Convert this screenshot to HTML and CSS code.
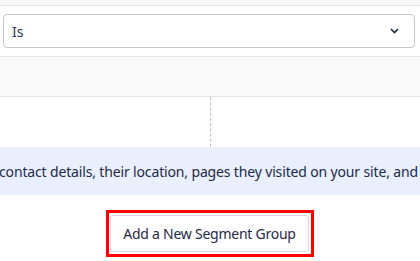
FILE: index.html
```html
<!doctype html>
<html>
<head>
<meta charset="UTF-8">
<title>Segment</title>
<link rel="stylesheet" href="styles.css">
</head>
<body>
<div class="page">
	<div class="top-bar"></div>

	<div class="field">
		<div class="select">
			<span class="select-value">Is</span>
			<svg class="chevron" width="9" height="6" viewBox="0 0 9 6">
				<path d="M1 1l3.5 3.5 3.5-3.5" fill="none" stroke="#1b2540" stroke-width="1.6"/>
			</svg>
		</div>
	</div>

	<div class="gray-row"></div>

	<div class="split">
		<div class="split-col left"></div>
		<div class="split-col"></div>
	</div>

	<div class="banner">
		<p>contact details, their location, pages they visited on your site, and</p>
	</div>

	<div class="actions">
		<div class="highlight">
			<button class="add-btn">Add a New Segment Group</button>
		</div>
	</div>
</div>
</body>
</html>
```

FILE: styles.css
```css
html, body {
	margin: 0;
	padding: 0;
	background: #fff;
}

.page {
	width: 420px;
	height: 261px;
	overflow: hidden;
	font-family: "Noto Sans", "Liberation Sans", sans-serif;
	color: #1d2a48;
}

.top-bar {
	height: 5px;
	background: #f8f8f8;
	border-bottom: 1px solid #e4e4e4;
}

.field {
	padding: 8px 5px 8px 3px;
	border-bottom: 1px solid #e4e4e4;
}

.select {
	height: 32px;
	border: 1px solid #c9c9c9;
	border-radius: 4px;
	display: flex;
	align-items: center;
	justify-content: space-between;
	padding: 0 15px 0 8px;
}

.select-value {
	font-size: 14px;
	color: #1e3a5f;
}

.gray-row {
	height: 39px;
	background: #f9f9f9;
	border-bottom: 1px solid #e4e4e4;
}

.split {
	height: 50px;
	display: flex;
}

.split-col {
	width: 210px;
}

.split-col.left {
	border-right: 1px dashed #c4c4c4;
}

.banner {
	height: 48px;
	background: #e9effd;
	display: flex;
	align-items: center;
	overflow: hidden;
}

.banner p {
	margin: 0;
	white-space: nowrap;
	font-size: 14px;
	letter-spacing: -0.15px;
	margin-left: -1px;
	color: #1d2a48;
}

.actions {
	display: flex;
	justify-content: center;
	padding-top: 15px;
}

.highlight {
	border: 3px solid #ff0000;
	padding: 2px 2px 2px 1px;
	display: flex;
}

.add-btn {
	width: 199px;
	height: 37px;
	background: #fff;
	border: 1px solid #d6dbe3;
	border-radius: 3px;
	font-family: inherit;
	font-size: 14px;
	letter-spacing: -0.25px;
	color: #1d2a48;
	padding: 0;
}
```
